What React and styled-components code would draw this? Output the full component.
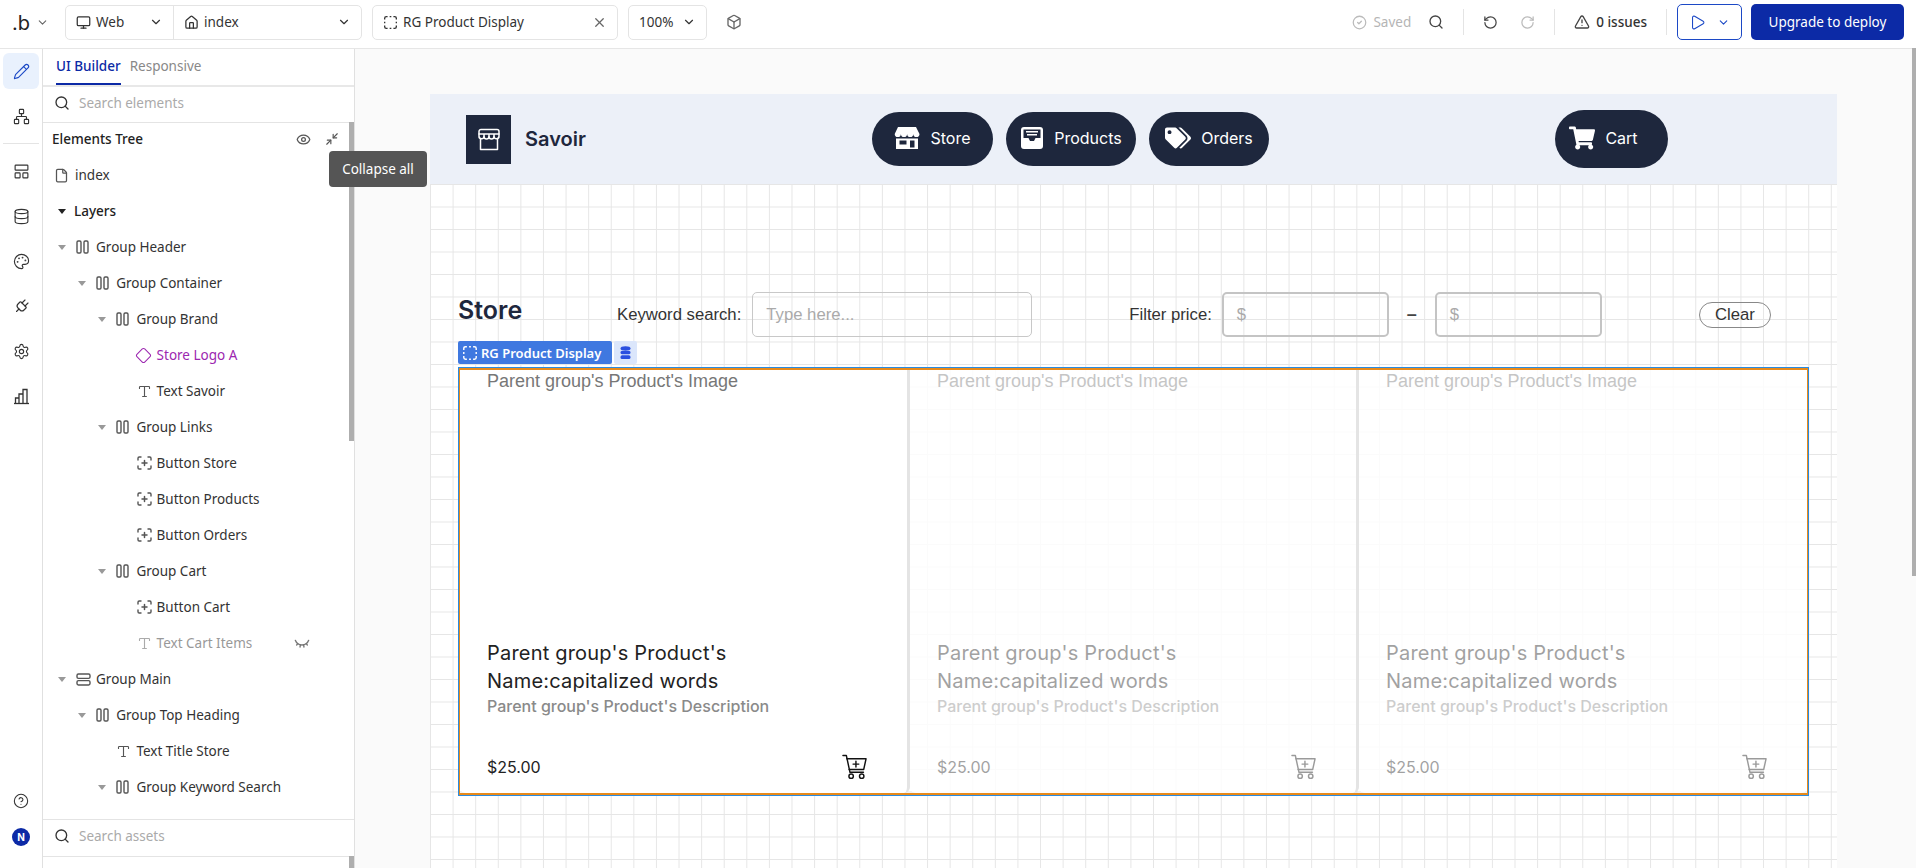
import React from 'react';
import styled, { createGlobalStyle } from 'styled-components';
import {
  Monitor, House, ChevronDown, X, Box, CircleCheck, Search, RotateCcw, RotateCw, TriangleAlert, Play,
  Pencil, Network, LayoutPanelTop, Database, Palette, Plug, Settings, CircleHelp,
  Eye, EyeClosed, Minimize2, File, Type, Diamond,
} from 'lucide-react';
import { FaTags, FaShoppingCart } from 'react-icons/fa';

const Global = createGlobalStyle`
  html, body { margin: 0; padding: 0; height: 100%; overflow: hidden; background: #fff; }
  * { box-sizing: border-box; }
  body { font-family: "Noto Sans", sans-serif; color: #333; }
`;

// Small drawings --------------------------------------------
const DashedSquare = ({ size = 18, color = 'currentColor' }) => (
  <svg width={size} height={size} viewBox="0 0 18 18" fill="none" stroke={color} strokeWidth="1.6" strokeLinecap="butt">
    <path d="M2 5.500V4a2 2 0 0 1 2-2h1.500M12.500 2H14a2 2 0 0 1 2 2v1.500M16 12.500V14a2 2 0 0 1-2 2h-1.500M5.500 16H4a2 2 0 0 1-2-2v-1.500M8 2h2M8 16h2M2 8v2M16 8v2" />
  </svg>
);

const ColumnsIcon = () => (
  <svg width="13" height="14" viewBox="0 0 13 14" fill="none" stroke="#555" strokeWidth="1.4">
    <rect x="1" y="1" width="4" height="12" rx="1.2" />
    <rect x="8" y="1" width="4" height="12" rx="1.2" />
  </svg>
);

const RowsIcon = () => (
  <svg width="15" height="13" viewBox="0 0 15 13" fill="none" stroke="#555" strokeWidth="1.4">
    <rect x="1" y="1" width="13" height="4.4" rx="1.4" />
    <rect x="1" y="7.6" width="13" height="4.4" rx="1.4" />
  </svg>
);

const ButtonIcon = () => (
  <svg width="15" height="14" viewBox="0 0 15 14" fill="none" stroke="#555" strokeWidth="1.4" strokeLinecap="round">
    <path d="M1 4V2.200A1.200 1.200 0 0 1 2.200 1H4M11 1h1.800A1.200 1.200 0 0 1 14 2.200V4M14 10v1.800a1.200 1.200 0 0 1-1.200 1.200H11M4 13H2.200A1.200 1.200 0 0 1 1 11.800V10" />
    <path d="M7.500 4.500v5M5 7h5" strokeWidth="1.500" />
  </svg>
);

const CartPlus = ({ color }) => (
  <svg width="25" height="26" viewBox="0 0 26 26" fill="none" stroke={color} strokeWidth="1.5" strokeLinecap="round" strokeLinejoin="round">
    <path d="M1 1h3.500l3.800 17.500h14" />
    <path d="M5 4.500h20l-2.400 11H7.400" />
    <path d="M14.500 7v6M11.500 10h6" />
    <circle cx="9.500" cy="22.500" r="2.300" />
    <circle cx="20.500" cy="22.500" r="2.300" />
  </svg>
);

const StoreOutline = () => (
  <svg width="24" height="23" viewBox="0 0 24 23" fill="none" stroke="#fff" strokeWidth="1.500" strokeLinejoin="round" strokeLinecap="round">
    <path d="M4 1.500h16a2 2 0 0 1 2 2V8a2.500 2.500 0 0 1-5 .5 2.500 2.500 0 0 1-5 0 2.500 2.500 0 0 1-5 0 2.500 2.500 0 0 1-5-.5V3.500a2 2 0 0 1 2-2z" />
    <path d="M2 6h20M7 6v2.500M12 6v2.500M17 6v2.500M3.500 11.500v10h17v-10" />
  </svg>
);

const StoreSolid = () => (
  <svg width="26" height="22" viewBox="0 0 26 22">
    <path fill="#fff" d="M4 0h18l3.500 7a3.100 3.100 0 0 1-6.200 0 3.100 3.100 0 0 1-6.200 0 3.100 3.100 0 0 1-6.200 0 3.100 3.100 0 0 1-6.200 0z" />
    <path fill="#fff" fillRule="evenodd" d="M2 11.500h22V22H2zM5.500 13.500v4h7v-4zM16 13.500V20.500h4.500v-7z" />
  </svg>
);

const TrayIcon = () => (
  <svg width="24" height="22" viewBox="0 0 24 22">
    <path fill="#fff" d="M4 0h16a3 3 0 0 1 3 3v16a3 3 0 0 1-3 3H4a3 3 0 0 1-3-3V3a3 3 0 0 1 3-3z" />
    <path fill="#1e273d" d="M3.500 2.500h17V11h-5l-1.500 3H10L8.500 11h-5z" />
    <path fill="#fff" d="M6 4h12v1.500H6zM7 7h10v1.500H7z" />
  </svg>
);

const StackIcon = () => (
  <svg width="11" height="14" viewBox="0 0 11 14" fill="#2a4fe0">
    <ellipse cx="5.500" cy="2.500" rx="5" ry="2.200" />
    <rect x="0.500" y="5" width="10" height="3.200" rx="1.400" />
    <rect x="0.500" y="9.300" width="10" height="3.800" rx="1.600" />
  </svg>
);

const BarsIcon = () => (
  <svg width="17" height="17" viewBox="0 0 17 17" fill="none" stroke="currentColor" strokeWidth="1.300">
    <path d="M1 15.500h15" />
    <path d="M2.500 15.500V10h3.500v5.500M6 15.500V6h4v9.500M10 15.500V1.500h4v14" />
  </svg>
);

const TiltedPlug = styled(Plug)`
  transform: rotate(45deg);
`;

const LogoDiamond = styled(Diamond)`
  margin-left: -2px;
`;

const Caret = styled.span`
  width: 0;
  height: 0;
  border-left: 4px solid transparent;
  border-right: 4px solid transparent;
  border-top: 5px solid ${p => (p.$dark ? '#222' : '#999')};
`;

// Data ------------------------------------------------------
const RAIL_MID = [LayoutPanelTop, Database, Palette, TiltedPlug, Settings];

const TREE = [
  { label: 'Group Header', depth: 0, open: true, icon: 'col' },
  { label: 'Group Container', depth: 1, open: true, icon: 'col' },
  { label: 'Group Brand', depth: 2, open: true, icon: 'col' },
  { label: 'Store Logo A', depth: 3, icon: 'diamond', purple: true },
  { label: 'Text Savoir', depth: 3, icon: 'text' },
  { label: 'Group Links', depth: 2, open: true, icon: 'col' },
  { label: 'Button Store', depth: 3, icon: 'btn' },
  { label: 'Button Products', depth: 3, icon: 'btn' },
  { label: 'Button Orders', depth: 3, icon: 'btn' },
  { label: 'Group Cart', depth: 2, open: true, icon: 'col' },
  { label: 'Button Cart', depth: 3, icon: 'btn' },
  { label: 'Text Cart Items', depth: 3, icon: 'text', hidden: true },
  { label: 'Group Main', depth: 0, open: true, icon: 'row' },
  { label: 'Group Top Heading', depth: 1, open: true, icon: 'col' },
  { label: 'Text Title Store', depth: 2, icon: 'text' },
  { label: 'Group Keyword Search', depth: 2, open: true, icon: 'col' },
];

const NAV = [
  { label: 'Store', width: 121, icon: <StoreSolid /> },
  { label: 'Products', width: 130, icon: <TrayIcon /> },
  { label: 'Orders', width: 120, icon: <FaTags size={26} /> },
];

function TreeIcon({ kind, purple, hidden }) {
  if (kind === 'col') return <ColumnsIcon />;
  if (kind === 'row') return <RowsIcon />;
  if (kind === 'btn') return <ButtonIcon />;
  if (kind === 'diamond') return <LogoDiamond size={17} color={purple ? '#9c27b0' : '#555'} strokeWidth={1.5} />;
  return <Type size={15} color={hidden ? '#aaa' : '#555'} strokeWidth={1.8} />;
}

function ProductCell({ ghost }) {
  return (
    <Cell $ghost={ghost}>
      <CellBody $ghost={ghost}>
        <ImageText>Parent group's Product's Image</ImageText>
        <ProductName>Parent group's Product's<br />Name:capitalized words</ProductName>
        <ProductDesc>Parent group's Product's Description</ProductDesc>
        <CellFooter>
          <Price>$25.00</Price>
          <CartPlus color="#111" />
        </CellFooter>
      </CellBody>
    </Cell>
  );
}

export default function App() {
  return (
    <>
      <Global />
      <Shell>
        <TopBar>
          <Brand>.b</Brand>
          <ChevronDown size={13} color="#666" />
          <SelectGroup>
            <SelectPart $w={107}><Monitor size={15} /><span>Web</span><Push /><ChevronDown size={14} /></SelectPart>
            <SelectPart $w={188} $divided><House size={15} /><span>index</span><Push /><ChevronDown size={14} /></SelectPart>
          </SelectGroup>
          <TabBox><DashedSquare size={15} /><span>RG Product Display</span><Push /><X size={15} color="#666" /></TabBox>
          <ZoomBox><span>100%</span><ChevronDown size={14} /></ZoomBox>
          <BarIcon><Box size={16} color="#666" /></BarIcon>

          <TopRight>
            <CircleCheck size={15} color="#bbb" />
            <SavedText>Saved</SavedText>
            <BarIcon $ml={17}><Search size={16} color="#444" /></BarIcon>
            <BarDivider />
            <BarIcon $ml={0}><RotateCcw size={15} color="#444" /></BarIcon>
            <BarIcon $ml={22}><RotateCw size={15} color="#bbb" /></BarIcon>
            <BarDivider />
            <TriangleAlert size={16} color="#444" />
            <IssuesText>0 issues</IssuesText>
            <BarDivider />
            <RunButton><Play size={17} strokeWidth={1.5} /><ChevronDown size={13} /></RunButton>
            <DeployButton>Upgrade to deploy</DeployButton>
          </TopRight>
        </TopBar>

        <Workspace>
          <Rail>
            <RailButton $active><Pencil size={17} strokeWidth={1.6} /></RailButton>
            <RailButton><Network size={17} strokeWidth={1.6} /></RailButton>
            <RailDivider />
            {RAIL_MID.map((Icon, i) => <RailButton key={i}><Icon size={17} strokeWidth={1.6} /></RailButton>)}
            <RailButton><BarsIcon /></RailButton>
            <Push />
            <RailButton><CircleHelp size={16} strokeWidth={1.6} /></RailButton>
            <Avatar>N</Avatar>
          </Rail>

          <Panel>
            <Tabs>
              <TabItem $active>UI Builder</TabItem>
              <TabItem>Responsive</TabItem>
            </Tabs>
            <SearchRow><Search size={16} color="#333" /><span>Search elements</span></SearchRow>
            <TreeArea>
              <TreeHead>
                <strong>Elements Tree</strong>
                <Push />
                <Eye size={15} color="#555" />
                <Minimize2 size={14} color="#555" />
              </TreeHead>
              <PageRow><File size={15} color="#555" /><span>index</span></PageRow>
              <LayersRow><Caret $dark /><span>Layers</span></LayersRow>
              {TREE.map(item => (
                <TreeRow key={item.label} $depth={item.depth} $purple={item.purple} $hidden={item.hidden}>
                  <CaretSlot>{item.open && <Caret />}</CaretSlot>
                  <IconSlot><TreeIcon kind={item.icon} purple={item.purple} hidden={item.hidden} /></IconSlot>
                  <span>{item.label}</span>
                  {item.hidden && <HiddenMark><EyeClosed size={16} color="#777" /></HiddenMark>}
                </TreeRow>
              ))}
            </TreeArea>
            <AssetSearch><Search size={16} color="#333" /><span>Search assets</span></AssetSearch>
            <PanelFoot />
            <Thumb />
            <ThumbBottom />
          </Panel>

          <Canvas>
            <Page>
              <SiteHeader>
                <SiteBrand>
                  <LogoTile><StoreOutline /></LogoTile>
                  <SiteName>Savoir</SiteName>
                </SiteBrand>
                <NavGroup>
                  {NAV.map(n => <NavPill key={n.label} $w={n.width}>{n.icon}<span>{n.label}</span></NavPill>)}
                </NavGroup>
                <CartPill $w={113}><FaShoppingCart size={26} /><span>Cart</span></CartPill>
              </SiteHeader>

              <Main>
                <FilterRow>
                  <StoreTitle>Store</StoreTitle>
                  <FieldLabel>Keyword search:</FieldLabel>
                  <KeywordInput>Type here...</KeywordInput>
                  <FieldLabel $ml={97}>Filter price:</FieldLabel>
                  <PriceInput>$</PriceInput>
                  <Dash>–</Dash>
                  <PriceInput $ml={0}>$</PriceInput>
                  <ClearButton>Clear</ClearButton>
                </FilterRow>
                <TagRow>
                  <RgTag><DashedSquare size={16} color="#fff" /><span>RG Product Display</span></RgTag>
                  <DataTag><StackIcon /></DataTag>
                </TagRow>
                <RepeatingGroup>
                  <ProductCell />
                  <ProductCell ghost />
                  <ProductCell ghost />
                </RepeatingGroup>
              </Main>
            </Page>
          </Canvas>
        </Workspace>

        <Tooltip>Collapse all</Tooltip>
        <PageScroll />
      </Shell>
    </>
  );
}

// Styled Components -----------------------------------------
const Shell = styled.div`
  position: relative;
  display: flex;
  flex-direction: column;
  width: 1916px;
  height: 868px;
  overflow: hidden;
`;

const Push = styled.div`
  flex: 1;
`;

const TopBar = styled.header`
  display: flex;
  align-items: center;
  flex: 0 0 49px;
  padding: 0 12px 4px 12px;
  border-bottom: 1px solid #e6e6e6;
  font-size: 13.5px;
  color: #333;
`;

const Brand = styled.div`
  width: 23px;
  margin-right: 1px;
  margin-top: 1px;
  font-family: "Inter", sans-serif;
  font-size: 20px;
  font-weight: 400;
  color: #222;
`;

const SelectGroup = styled.div`
  display: flex;
  height: 35px;
  margin-left: 16px;
  border: 1px solid #e4e4e4;
  border-radius: 5px;
`;

const SelectPart = styled.div`
  display: flex;
  align-items: center;
  gap: 5px;
  width: ${p => p.$w}px;
  padding: 0 10px;
  border-left: ${p => (p.$divided ? '1px solid #e4e4e4' : 'none')};
`;

const TabBox = styled.div`
  display: flex;
  align-items: center;
  gap: 5px;
  width: 246px;
  height: 35px;
  margin-left: 10px;
  padding: 0 10px;
  border: 1px solid #e4e4e4;
  border-radius: 5px;
`;

const ZoomBox = styled.div`
  display: flex;
  align-items: center;
  justify-content: space-between;
  width: 79px;
  height: 35px;
  margin-left: 10px;
  padding: 0 10px;
  border: 1px solid #e4e4e4;
  border-radius: 5px;
`;

const BarIcon = styled.div`
  display: flex;
  margin-left: ${p => p.$ml ?? 19}px;
`;

const TopRight = styled.div`
  display: flex;
  align-items: center;
  margin-left: auto;
`;

const SavedText = styled.span`
  margin-left: 6px;
  color: #b5b5b5;
`;

const BarDivider = styled.div`
  width: 1px;
  height: 26px;
  margin: 0 19px;
  background: #e4e4e4;
`;

const IssuesText = styled.span`
  margin-left: 6px;
  font-weight: 500;
`;

const RunButton = styled.button`
  display: flex;
  align-items: center;
  justify-content: center;
  gap: 11px;
  width: 65px;
  height: 36px;
  margin-left: -9px;
  padding: 0;
  background: #fff;
  border: 1px solid #1c49c6;
  border-radius: 5px;
  color: #1c49c6;
`;

const DeployButton = styled.button`
  width: 153px;
  height: 36px;
  margin-left: 9px;
  padding: 0;
  background: #0c2aa6;
  border: none;
  border-radius: 5px;
  color: #fff;
  font-family: "Noto Sans", sans-serif;
  font-size: 13.5px;
`;

const Workspace = styled.div`
  display: flex;
  flex: 1;
  min-height: 0;
`;

const Rail = styled.nav`
  display: flex;
  flex-direction: column;
  align-items: center;
  gap: 9px;
  flex: 0 0 43px;
  padding: 4px 0 22px;
  border-right: 1px solid #e0e0e0;
  color: #333;
`;

const RailButton = styled.div`
  display: flex;
  align-items: center;
  justify-content: center;
  flex: 0 0 36px;
  width: 36px;
  border-radius: 6px;
  background: ${p => (p.$active ? '#e9f1fd' : 'transparent')};
  color: ${p => (p.$active ? '#1c49c6' : '#333')};
`;

const RailDivider = styled.div`
  width: 36px;
  height: 1px;
  background: #e4e4e4;
`;

const Avatar = styled.div`
  display: flex;
  align-items: center;
  justify-content: center;
  width: 18px;
  height: 18px;
  border-radius: 50%;
  background: #0c2aa6;
  color: #fff;
  font-family: "Inter", sans-serif;
  font-size: 10px;
  font-weight: 700;
`;

const Panel = styled.aside`
  position: relative;
  display: flex;
  flex-direction: column;
  flex: 0 0 312px;
  border-right: 1px solid #e0e0e0;
  background: #fff;
  font-size: 13.5px;
  color: #333;
`;

const Tabs = styled.div`
  display: flex;
  gap: 9px;
  flex: 0 0 36px;
  padding: 0 13px;
  border-bottom: 2px solid #e8e8e8;
`;

const TabItem = styled.div`
  height: 36px;
  padding-top: 8px;
  border-bottom: 2px solid ${p => (p.$active ? '#0c2aa6' : 'transparent')};
  color: ${p => (p.$active ? '#0c2aa6' : '#888')};
  font-weight: ${p => (p.$active ? 500 : 400)};
`;

const SearchRow = styled.div`
  display: flex;
  align-items: center;
  gap: 9px;
  flex: 0 0 36px;
  padding: 0 11px 3px;
  border-bottom: 1px solid #e4e4e4;
  color: #aaa;
`;

const AssetSearch = styled(SearchRow)`
  flex: 0 0 38px;
  padding-bottom: 4px;
  border-top: 1px solid #e4e4e4;
`;

const PanelFoot = styled.div`
  flex: 1;
`;

const TreeArea = styled.div`
  flex: 0 0 696px;
  overflow: hidden;
`;

const TreeHead = styled.div`
  display: flex;
  align-items: center;
  gap: 14px;
  height: 36px;
  margin-top: -2px;
  padding: 0 15px 0 9px;
  strong {
    font-weight: 500;
    color: #222;
  }
`;

const PageRow = styled.div`
  display: flex;
  align-items: center;
  gap: 6px;
  height: 36px;
  padding-left: 11px;
`;

const LayersRow = styled.div`
  display: flex;
  align-items: center;
  gap: 8px;
  height: 36px;
  padding-left: 15px;
  font-weight: 500;
  color: #222;
`;

const TreeRow = styled.div`
  display: flex;
  align-items: center;
  height: 36px;
  padding-left: ${p => 15 + p.$depth * 20.2}px;
  color: ${p => (p.$purple ? '#9c27b0' : p.$hidden ? '#999' : '#333')};
`;

const CaretSlot = styled.div`
  display: flex;
  align-items: center;
  flex: 0 0 18px;
`;

const IconSlot = styled.div`
  display: flex;
  align-items: center;
  flex: 0 0 20px;
`;

const HiddenMark = styled.span`
  display: flex;
  margin-left: 42px;
`;

const Thumb = styled.div`
  position: absolute;
  top: 73px;
  right: 0;
  width: 5px;
  height: 319px;
  background: #aeaeae;
`;

const ThumbBottom = styled.div`
  position: absolute;
  bottom: 0;
  right: 0;
  width: 5px;
  height: 12px;
  background: #aeaeae;
`;

const Canvas = styled.main`
  flex: 1;
  min-width: 0;
  padding: 45px 0 0 75px;
  background: #fafafa;
  overflow: hidden;
`;

const Page = styled.div`
  width: 1407px;
  height: 780px;
  background-color: #fff;
  background-image:
    linear-gradient(to right, #e6e6e6 1px, transparent 1px),
    linear-gradient(to bottom, #e6e6e6 1px, transparent 1px);
  background-size: 22.6px 22.5px;
`;

const SiteHeader = styled.div`
  display: flex;
  align-items: center;
  height: 90px;
  padding-left: 36px;
  background: #ecf0f8;
`;

const SiteBrand = styled.div`
  display: flex;
  align-items: center;
  gap: 14px;
  width: 406px;
`;

const LogoTile = styled.div`
  display: flex;
  align-items: center;
  justify-content: center;
  width: 45px;
  height: 49px;
  background: #1e273d;
`;

const SiteName = styled.div`
  font-family: "Inter", sans-serif;
  font-size: 20px;
  font-weight: 600;
  color: #1e273d;
`;

const NavGroup = styled.div`
  display: flex;
  gap: 13px;
`;

const NavPill = styled.div`
  display: flex;
  align-items: center;
  justify-content: center;
  gap: 10px;
  width: ${p => p.$w}px;
  height: 54px;
  padding-bottom: 2px;
  border-radius: 27px;
  background: #1e273d;
  color: #fff;
  font-family: "Inter", sans-serif;
  font-size: 16px;
  font-weight: 400;
`;

const CartPill = styled(NavPill)`
  height: 58px;
  margin-left: 286px;
  padding-right: 16px;
  border-radius: 29px;
`;

const Main = styled.div`
  padding: 108px 28px 0;
`;

const FilterRow = styled.div`
  display: flex;
  align-items: center;
  height: 45px;
`;

const StoreTitle = styled.h1`
  width: 159px;
  margin: 0 0 10px;
  font-family: "Inter", sans-serif;
  font-size: 25px;
  font-weight: 600;
  color: #1e273d;
`;

const FieldLabel = styled.label`
  margin-left: ${p => p.$ml ?? 0}px;
  font-family: "Liberation Sans", sans-serif;
  font-size: 16.7px;
  color: #333;
`;

const KeywordInput = styled.div`
  display: flex;
  align-items: center;
  width: 280px;
  height: 45px;
  margin-left: 11px;
  padding: 0 13px;
  border: 1.5px solid #c8c8c8;
  border-radius: 5px;
  background: transparent;
  font-family: "Liberation Sans", sans-serif;
  font-size: 16.7px;
  color: #aaa;
`;

const PriceInput = styled(KeywordInput)`
  width: 167px;
  margin-left: ${p => p.$ml ?? 10}px;
  border: 2px solid #c4c4c4;
`;

const Dash = styled.span`
  width: 46px;
  text-align: center;
  font-family: "Liberation Sans", sans-serif;
  font-size: 18px;
  font-weight: 700;
  color: #444;
`;

const ClearButton = styled.button`
  width: 72px;
  height: 26px;
  margin-left: 97px;
  padding: 0;
  background: transparent;
  border: 1px solid #888;
  border-radius: 13px;
  font-family: "Liberation Sans", sans-serif;
  font-size: 16.7px;
  color: #333;
`;

const TagRow = styled.div`
  display: flex;
  gap: 2px;
  height: 23px;
  margin-top: 4px;
`;

const RgTag = styled.div`
  display: flex;
  align-items: center;
  gap: 3px;
  width: 154px;
  padding-left: 4px;
  border-radius: 2px;
  background: #3f78e0;
  color: #fff;
  font-size: 13px;
  font-weight: 600;
  white-space: nowrap;
`;

const DataTag = styled.div`
  display: flex;
  align-items: center;
  justify-content: center;
  width: 23px;
  border-radius: 2px;
  background: #dbe6fb;
`;

const RepeatingGroup = styled.div`
  display: grid;
  grid-template-columns: 450px 449px 1fr;
  width: 1349px;
  height: 427px;
  margin: 4px 0 0 1px;
  border: 1px solid #e88a1a;
  border-width: 2px 1px;
  outline: 1px solid #2a8be0;
`;

const Cell = styled.div`
  min-width: 0;
  background: ${p => (p.$ghost ? 'rgba(255,255,255,0.82)' : '#fff')};
  border-right: 3px solid #e4e4e4;
  border-radius: 0 0 6px 6px;
  &:last-child {
    border-right: none;
  }
`;

const CellBody = styled.div`
  display: flex;
  flex-direction: column;
  height: 100%;
  padding: 0 27px;
  opacity: ${p => (p.$ghost ? 0.42 : 1)};
`;

const ImageText = styled.div`
  flex: 0 0 269px;
  padding-top: 1px;
  font-family: "Liberation Sans", sans-serif;
  font-size: 18px;
  line-height: 20px;
  color: #777;
`;

const ProductName = styled.div`
  font-family: "Inter", sans-serif;
  font-size: 20px;
  line-height: 28px;
  letter-spacing: 0.2px;
  color: #222;
`;

const ProductDesc = styled.div`
  height: 20px;
  margin-top: 1px;
  overflow: hidden;
  font-family: "Inter", sans-serif;
  font-size: 16px;
  line-height: 21px;
  font-weight: 500;
  color: #8a8a8a;
`;

const CellFooter = styled.div`
  display: flex;
  align-items: center;
  justify-content: space-between;
  margin-top: 38px;
  padding-right: 13px;
`;

const Price = styled.div`
  font-family: "Inter", sans-serif;
  font-size: 16px;
  font-weight: 400;
  color: #222;
`;

const Tooltip = styled.div`
  position: absolute;
  top: 151px;
  left: 329px;
  display: flex;
  align-items: center;
  justify-content: center;
  width: 98px;
  height: 36px;
  border-radius: 4px;
  background: #555;
  color: #fff;
  font-size: 13.5px;
`;

const PageScroll = styled.div`
  position: absolute;
  top: 48px;
  right: 0;
  width: 4px;
  height: 528px;
  background: #aeaeae;
`;
